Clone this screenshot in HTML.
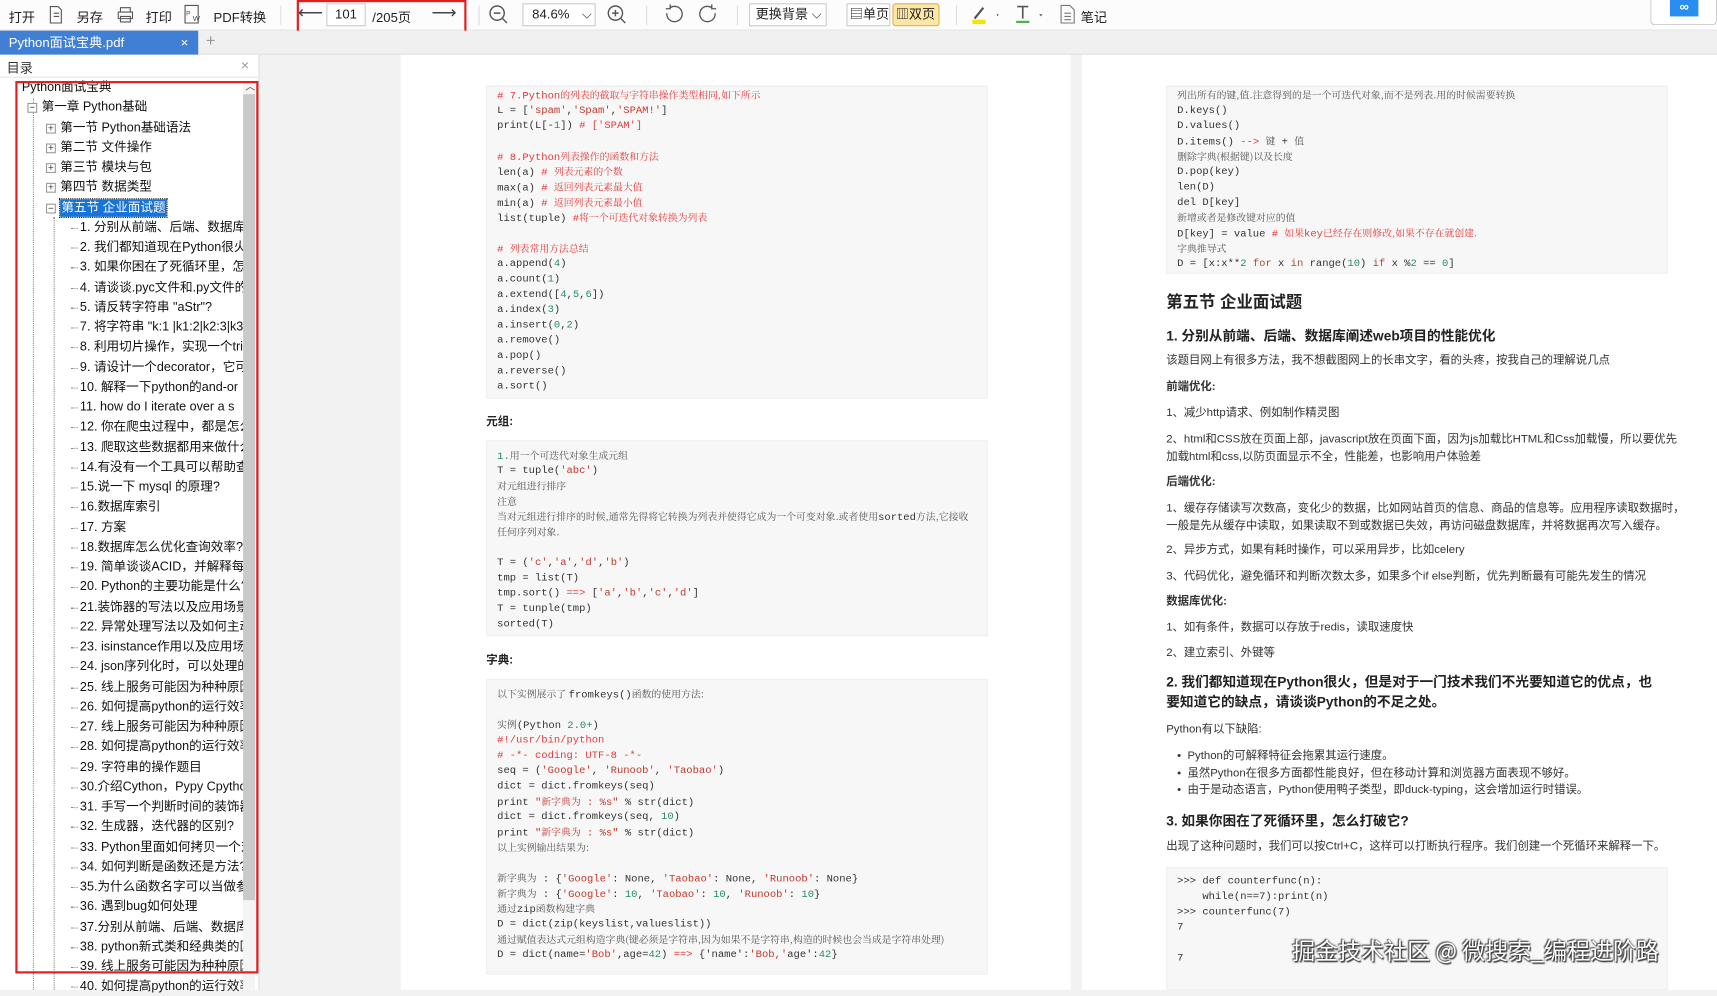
<!DOCTYPE html>
<html><head><meta charset="utf-8"><style>
*{margin:0;padding:0;box-sizing:border-box}
html,body{width:1717px;height:990px;overflow:hidden;background:#f2f2f2}
#w{position:absolute;left:0;top:0;width:1568px;height:904px;transform:scale(1.09503);transform-origin:0 0;font-family:"Liberation Sans","Noto Sans CJK SC",sans-serif;color:#333}
.a{position:absolute;white-space:nowrap}
#tb{left:0;top:0;width:1568px;height:28px;background:#fcfcfc;border-bottom:1px solid #e2e2e2;font-size:12px;color:#222}
#tb .a{top:7px}
.sep{position:absolute;top:5px;width:1px;height:18px;background:#ddd}
#tabs{left:0;top:28px;width:1568px;height:22px;background:#f0f0f0;border-bottom:1px solid #ddd}
#side{left:0;top:50px;width:237px;height:854px;background:#fff;border-right:1px solid #ddd}
.t{position:absolute;font-size:11.5px;color:#111;white-space:nowrap;overflow:hidden;line-height:16px}
.pg{position:absolute;background:#fff;top:50px;height:854px}
.cb{position:absolute;background:#f7f7f7;border:1px solid #efefef}
.c{position:absolute;font-family:"Liberation Mono","Noto Sans CJK SC",monospace;font-size:9.6px;color:#333;white-space:nowrap}
.c .ln{height:14px;line-height:12px;overflow:visible}
.r{color:#e03c3c}.g{color:#2a8a6a}.s{color:#c0392b}.k{color:#a0522d}.m{color:#555;font-family:"Noto Serif CJK SC","Liberation Serif",serif;font-size:9px}
.p{position:absolute;font-size:10.4px;color:#333;white-space:nowrap;line-height:13px}
.h{position:absolute;font-weight:bold;color:#222;white-space:nowrap}
</style></head><body><div id="w">
<div id="tb" class="a">
 <span class="a" style="left:8px">打开</span>
 <svg class="a" style="left:44px;top:5px" width="14" height="17"><path d="M2 1h7l3 3v12H2z M5 7h5 M5 10h5" fill="none" stroke="#555"/></svg>
 <span class="a" style="left:70px">另存</span>
 <svg class="a" style="left:106px;top:5px" width="17" height="17"><path d="M4 6V2h9v4 M2 6h13v6H2z M4 10h9v5H4z" fill="none" stroke="#555"/></svg>
 <span class="a" style="left:133px">打印</span>
 <svg class="a" style="left:168px;top:4px" width="18" height="18"><path d="M1 1h12v16H1z" fill="none" stroke="#555"/><text x="2" y="10" font-size="6" fill="#555">P</text><text x="8" y="15" font-size="7" fill="#555">W</text></svg>
 <span class="a" style="left:195px">PDF转换</span>
 <div class="sep" style="left:256px"></div>
 <div class="a" style="left:271px;top:0;width:155px;height:33px;border:2px solid #e02020"></div>
 <span class="a" style="left:272px;top:2px;font-size:16px;color:#444">⟵</span>
 <div class="a" style="left:298px;top:3px;width:36px;height:21px;border:1px solid #ccc;background:#fff;text-align:center;line-height:19px">101</div>
 <span class="a" style="left:340px">/205页</span>
 <span class="a" style="left:394px;top:2px;font-size:16px;color:#444">⟶</span>
 <div class="sep" style="left:437px"></div>
 <svg class="a" style="left:446px;top:4px" width="18" height="18"><circle cx="8" cy="8" r="6.5" fill="none" stroke="#555" stroke-width="1.3"/><path d="M5 8h6 M13 13l4 4" stroke="#555" stroke-width="1.3"/></svg>
 <div class="a" style="left:477px;top:3px;width:67px;height:21px;border:1px solid #ccc;background:#fff;line-height:19px;padding-left:8px">84.6% <span style="margin-left:8px">⌵</span></div>
 <svg class="a" style="left:554px;top:4px" width="18" height="18"><circle cx="8" cy="8" r="6.5" fill="none" stroke="#555" stroke-width="1.3"/><path d="M5 8h6 M8 5v6 M13 13l4 4" stroke="#555" stroke-width="1.3"/></svg>
 <div class="sep" style="left:590px"></div>
 <svg class="a" style="left:606px;top:3px" width="18" height="20"><path d="M6 4a7 7 0 1 1-3 5 M6 1v4H2" fill="none" stroke="#555" stroke-width="1.2"/></svg>
 <svg class="a" style="left:638px;top:3px" width="18" height="20"><path d="M12 4a7 7 0 1 0 3 5 M12 1v4h4" fill="none" stroke="#555" stroke-width="1.2"/></svg>
 <div class="sep" style="left:673px"></div>
 <div class="a" style="left:684px;top:3px;width:71px;height:21px;border:1px solid #ccc;background:#fff;line-height:19px;padding-left:5px">更换背景 ⌵</div>
 <div class="a" style="left:773px;top:3px;width:40px;height:21px;border:1px solid #ccc;background:#fff;line-height:19px;padding-left:2px">▤单页</div>
 <div class="a" style="left:815px;top:3px;width:43px;height:21px;border:1px solid #e0b050;background:#fde7a6;border-radius:3px;line-height:19px;padding-left:2px">▥双页</div>
 <div class="sep" style="left:873px"></div>
 <svg class="a" style="left:886px;top:3px" width="30" height="20"><path d="M4 14L12 4" stroke="#555" stroke-width="2"/><rect x="2" y="15" width="12" height="4" fill="#f5e400"/><path d="M24 10l2 0-1 2z" fill="#555"/></svg>
 <svg class="a" style="left:926px;top:3px" width="30" height="20"><path d="M3 3h10 M8 3v11" stroke="#555" stroke-width="1.5"/><rect x="2" y="16" width="12" height="2" fill="#4caf50"/><path d="M23 10l3 0-1.5 2z" fill="#555"/></svg>
 <svg class="a" style="left:968px;top:4px" width="14" height="18"><path d="M1 1h8l4 4v12H1z M4 8h6 M4 11h6 M4 14h6" fill="none" stroke="#777"/></svg>
 <span class="a" style="left:987px">笔记</span>
 <div class="a" style="left:1507px;top:0;width:61px;height:23px;border:1px solid #ccc;border-top:none;border-radius:0 0 4px 4px;background:#fff"></div>
 <div class="a" style="left:1525px;top:0;width:26px;height:15px;background:#2a8ef0;color:#fff;font-size:12px;text-align:center;line-height:13px;font-weight:bold">∞</div>
</div>
<div id="tabs" class="a">
 <div class="a" style="left:0;top:0;width:181px;height:22px;background:#3f7fd4;color:#fff;font-size:12px;line-height:22px;padding-left:8px">Python面试宝典.pdf<span style="position:absolute;left:165px">×</span></div>
 <span class="a" style="left:188px;top:1px;color:#999;font-size:15px">+</span>
</div>
<div id="side" class="a">
 <span class="a" style="left:6px;top:3px;font-size:12px">目录</span>
 <span class="a" style="left:220px;top:2px;font-size:13px;color:#999">×</span>
 <div class="a" style="left:0;top:20px;width:236px;height:1px;background:#e4e4e4"></div>
 <div class="a" style="left:222px;top:24px;width:11px;height:830px;background:#f4f4f4"></div>
 <div class="a" style="left:222px;top:36px;width:11px;height:736px;background:#c9c9c9"></div>
 <span class="a" style="left:224px;top:22px;font-size:9px;color:#444">︿</span>
 <div class="a" style="left:30px;top:40px;border-left:1px dotted #888;height:814px"></div>
 <div class="a" style="left:49px;top:148px;border-left:1px dotted #888;height:706px"></div>
</div>
<div class="a" style="left:14px;top:74px;width:222px;height:815px;border:2px solid #e02020;z-index:5"></div>
<div id="tree"></div>
<div class="pg" style="left:366px;width:612px"></div>
<div class="pg" style="left:988px;width:580px"></div>

<div class="cb" style="left:444px;top:78px;width:458px;height:286px"></div>
<div class="c" style="left:454px;top:81px">
<span class="r"># 7.Python<span class="m" style="color:#e03c3c">的列表的截取与字符串操作类型相同,如下所示</span></span><br>
L = [<span class="s">'spam'</span>,<span class="s">'Spam'</span>,<span class="s">'SPAM!'</span>]<br>
print(L[-<span class="g">1</span>]) <span class="r"># ['SPAM']</span><br><br>
<span class="r"># 8.Python<span class="m" style="color:#e03c3c">列表操作的函数和方法</span></span><br>
len(a)  <span class="r"># <span class="m" style="color:#e03c3c">列表元素的个数</span></span><br>
max(a)  <span class="r"># <span class="m" style="color:#e03c3c">返回列表元素最大值</span></span><br>
min(a)  <span class="r"># <span class="m" style="color:#e03c3c">返回列表元素最小值</span></span><br>
list(tuple) <span class="r">#<span class="m" style="color:#e03c3c">将一个可迭代对象转换为列表</span></span><br><br>
<span class="r"># <span class="m" style="color:#e03c3c">列表常用方法总结</span></span><br>
a.append(<span class="g">4</span>)<br>a.count(<span class="g">1</span>)<br>a.extend([<span class="g">4</span>,<span class="g">5</span>,<span class="g">6</span>])<br>a.index(<span class="g">3</span>)<br>a.insert(<span class="g">0</span>,<span class="g">2</span>)<br>a.remove()<br>a.pop()<br>a.reverse()<br>a.sort()</div>
<div class="h" style="left:444px;top:377px;font-size:10.5px">元组:</div>
<div class="cb" style="left:444px;top:402px;width:458px;height:179px"></div>
<div class="c" style="left:454px;top:410px">
<span class="g">1.</span><span class="m">用一个可迭代对象生成元组</span><br>
T = tuple(<span class="s">'abc'</span>)<br><span class="m">对元组进行排序</span><br><span class="m">注意</span><br>
<span class="m">当对元组进行排序的时候,通常先得将它转换为列表并使得它成为一个可变对象.或者使用</span>sorted<span class="m">方法,它接收</span><br>
<span class="m">任何序列对象.</span><br><br>
T = (<span class="s">'c'</span>,<span class="s">'a'</span>,<span class="s">'d'</span>,<span class="s">'b'</span>)<br>tmp = list(T)<br>tmp.sort()  <span class="r">==&gt;</span> [<span class="s">'a'</span>,<span class="s">'b'</span>,<span class="s">'c'</span>,<span class="s">'d'</span>]<br>T = tunple(tmp)<br>sorted(T)</div>
<div class="h" style="left:444px;top:595px;font-size:10.5px">字典:</div>
<div class="cb" style="left:444px;top:620px;width:458px;height:270px"></div>
<div class="c" style="left:454px;top:628px">
<span class="m">以下实例展示了 </span>fromkeys()<span class="m">函数的使用方法:</span><br><br>
<span class="m">实例</span>(Python <span class="g">2.0+</span>)<br>
<span class="r">#!/usr/bin/python</span><br><span class="r"># -*- coding: UTF-8 -*-</span><br>
seq = (<span class="s">'Google'</span>, <span class="s">'Runoob'</span>, <span class="s">'Taobao'</span>)<br>
dict = dict.fromkeys(seq)<br>
print <span class="s">"<span class="m" style="color:#c0392b">新字典为</span> : %s"</span> % str(dict)<br>
dict = dict.fromkeys(seq, <span class="g">10</span>)<br>
print <span class="s">"<span class="m" style="color:#c0392b">新字典为</span> : %s"</span> % str(dict)<br>
<span class="m">以上实例输出结果为:</span><br><br>
<span class="m">新字典为</span> : {<span class="s">'Google'</span>: None, <span class="s">'Taobao'</span>: None, <span class="s">'Runoob'</span>: None}<br>
<span class="m">新字典为</span> : {<span class="s">'Google'</span>: <span class="g">10</span>, <span class="s">'Taobao'</span>: <span class="g">10</span>, <span class="s">'Runoob'</span>: <span class="g">10</span>}<br>
<span class="m">通过</span>zip<span class="m">函数构建字典</span><br>
D = dict(zip(keyslist,valueslist))<br>
<span class="m">通过赋值表达式元组构造字典(键必须是字符串,因为如果不是字符串,构造的时候也会当成是字符串处理)</span><br>
D = dict(name=<span class="s">'Bob'</span>,age=<span class="g">42</span>)  <span class="r">==&gt;</span> {'name':<span class="s">'Bob,'</span>age':<span class="g">42</span>}</div>

<div class="cb" style="left:1065px;top:78px;width:458px;height:172px"></div>
<div class="c" style="left:1075px;top:81px">
<span class="m">列出所有的键,值.注意得到的是一个可迭代对象,而不是列表.用的时候需要转换</span><br>
D.keys()<br>D.values()<br>D.items()  <span class="r">--&gt;</span> <span class="m">键</span> + <span class="m">值</span><br>
<span class="m">删除字典(根据键)以及长度</span><br>D.pop(key)<br>len(D)<br>del D[key]<br>
<span class="m">新增或者是修改键对应的值</span><br>
D[key] = value  <span class="r"># <span class="m" style="color:#e03c3c">如果</span>key<span class="m" style="color:#e03c3c">已经存在则修改,如果不存在就创建.</span></span><br>
<span class="m">字典推导式</span><br>
D = [x:x**<span class="g">2</span> <span class="k">for</span> x <span class="k">in</span> range(<span class="g">10</span>) <span class="k">if</span> x %<span class="g">2</span> == <span class="g">0</span>]</div>
<div class="h" style="left:1065px;top:265px;font-size:15px">第五节 企业面试题</div>
<div class="h" style="left:1065px;top:296px;font-size:12.5px">1. 分别从前端、后端、数据库阐述web项目的性能优化</div>
<div class="p" style="left:1065px;top:323px">该题目网上有很多方法，我不想截图网上的长串文字，看的头疼，按我自己的理解说几点</div>
<div class="p" style="left:1065px;top:347px;font-weight:bold">前端优化:</div>
<div class="p" style="left:1065px;top:371px">1、减少http请求、例如制作精灵图</div>
<div class="p" style="left:1065px;top:394px;line-height:16px">2、html和CSS放在页面上部，javascript放在页面下面，因为js加载比HTML和Css加载慢，所以要优先<br>加载html和css,以防页面显示不全，性能差，也影响用户体验差</div>
<div class="p" style="left:1065px;top:434px;font-weight:bold">后端优化:</div>
<div class="p" style="left:1065px;top:457px;line-height:15.5px">1、缓存存储读写次数高，变化少的数据，比如网站首页的信息、商品的信息等。应用程序读取数据时，<br>一般是先从缓存中读取，如果读取不到或数据已失效，再访问磁盘数据库，并将数据再次写入缓存。</div>
<div class="p" style="left:1065px;top:496px">2、异步方式，如果有耗时操作，可以采用异步，比如celery</div>
<div class="p" style="left:1065px;top:520px">3、代码优化，避免循环和判断次数太多，如果多个if else判断，优先判断最有可能先发生的情况</div>
<div class="p" style="left:1065px;top:543px;font-weight:bold">数据库优化:</div>
<div class="p" style="left:1065px;top:567px">1、如有条件，数据可以存放于redis，读取速度快</div>
<div class="p" style="left:1065px;top:590px">2、建立索引、外键等</div>
<div class="h" style="left:1065px;top:614px;font-size:12.5px;line-height:18px">2. 我们都知道现在Python很火，但是对于一门技术我们不光要知道它的优点，也<br>要知道它的缺点，请谈谈Python的不足之处。</div>
<div class="p" style="left:1065px;top:660px">Python有以下缺陷:</div>
<div class="p" style="left:1075px;top:683px;line-height:15.5px">•&nbsp;&nbsp;Python的可解释特征会拖累其运行速度。<br>•&nbsp;&nbsp;虽然Python在很多方面都性能良好，但在移动计算和浏览器方面表现不够好。<br>•&nbsp;&nbsp;由于是动态语言，Python使用鸭子类型，即duck-typing，这会增加运行时错误。</div>
<div class="h" style="left:1065px;top:739px;font-size:12.5px">3. 如果你困在了死循环里，怎么打破它?</div>
<div class="p" style="left:1065px;top:767px">出现了这种问题时，我们可以按Ctrl+C，这样可以打断执行程序。我们创建一个死循环来解释一下。</div>
<div class="cb" style="left:1065px;top:792px;width:458px;height:112px"></div>
<div class="c" style="left:1075px;top:799px">&gt;&gt;&gt; def counterfunc(n):<br>&nbsp;&nbsp;&nbsp;&nbsp;while(n==7):print(n)<br>&gt;&gt;&gt; counterfunc(7)<br>7<br><br>7</div>
<div class="a" style="left:1180px;top:853px;font-size:21px;color:#fff;font-family:'Noto Sans CJK SC',sans-serif;text-shadow:0 0 2px #333,1px 1px 1px #333,-1px -1px 1px #555">掘金技术社区 @ 微搜索_编程进阶路</div>
</div>
<script>
document.querySelectorAll('.c').forEach(function(e){e.innerHTML=e.innerHTML.split(/<br\s*\/?>/).map(function(l){return '<div class="ln">'+l+'</div>';}).join('');});
var items=[["Python面试宝典",20,0],["第一章 Python基础",38,1],["第一节 Python基础语法",55,2],["第二节 文件操作",55,2],["第三节 模块与包",55,2],["第四节 数据类型",55,2],["第五节 企业面试题",55,3]];
["1. 分别从前端、后端、数据库阐述","2. 我们都知道现在Python很火","3. 如果你困在了死循环里，怎么","4. 请谈谈.pyc文件和.py文件的","5. 请反转字符串 \"aStr\"?","7. 将字符串 \"k:1 |k1:2|k2:3|k3","8. 利用切片操作，实现一个trim","9. 请设计一个decorator，它可","10. 解释一下python的and-or","11. how do I iterate over a s","12. 你在爬虫过程中，都是怎么","13. 爬取这些数据都用来做什么","14.有没有一个工具可以帮助查","15.说一下 mysql 的原理?","16.数据库索引","17. 方案","18.数据库怎么优化查询效率?","19. 简单谈谈ACID，并解释每一","20. Python的主要功能是什么?","21.装饰器的写法以及应用场景","22. 异常处理写法以及如何主动","23. isinstance作用以及应用场","24. json序列化时，可以处理的","25. 线上服务可能因为种种原因","26. 如何提高python的运行效率","27. 线上服务可能因为种种原因","28. 如何提高python的运行效率","29. 字符串的操作题目","30.介绍Cython，Pypy Cpython","31. 手写一个判断时间的装饰器","32. 生成器，迭代器的区别?","33. Python里面如何拷贝一个对","34. 如何判断是函数还是方法?","35.为什么函数名字可以当做参","36. 遇到bug如何处理","37.分别从前端、后端、数据库","38. python新式类和经典类的区","39. 线上服务可能因为种种原因","40. 如何提高python的运行效率"].forEach(function(s){items.push([s,73,0]);});
var h="";items.forEach(function(p,i){var x=p[1],y=72+i*18.25,typ=p[2];
var box="";if(typ){var bx=x-13;box='<div class="a" style="left:'+bx+'px;top:'+(y+4)+'px;width:9px;height:9px;border:1px solid #999;background:#fff;font-size:9px;line-height:7px;text-align:center;color:#333">'+(typ==2?"+":"−")+'</div>';}
else if(i>6) box='<div class="a" style="left:'+(x-8)+'px;top:'+(y+8)+'px;width:6px;border-top:1px dotted #888"></div>';
var st=typ==3?"background:#1874d8;color:#fff;outline:1px dotted #000;padding:0 1px;":"";
h+=box+'<div class="t" style="left:'+x+'px;top:'+y+'px;max-width:'+(222-x)+'px;'+st+'">'+p[0]+'</div>';});
document.getElementById("tree").innerHTML=h;
</script>
</body></html>
